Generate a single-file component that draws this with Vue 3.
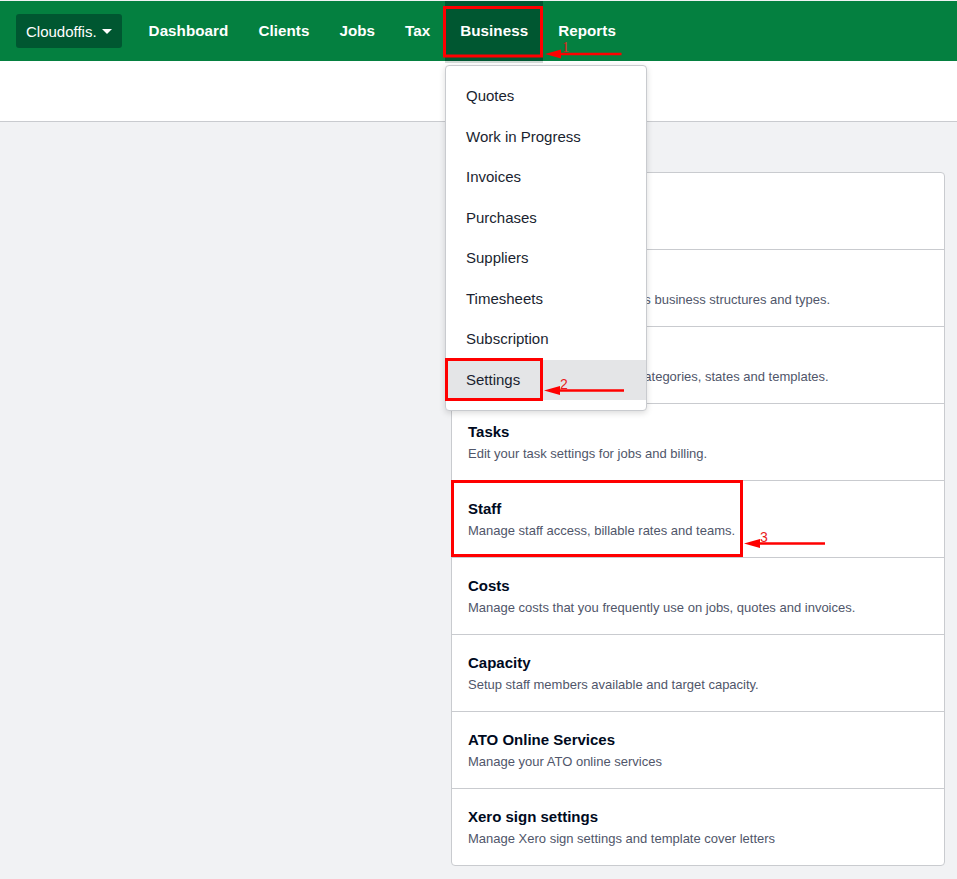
<script setup>
const navLinks = ["Dashboard", "Clients", "Jobs", "Tax", "Business", "Reports"]

const menuItems = ["Quotes", "Work in Progress", "Invoices", "Purchases", "Suppliers", "Timesheets", "Subscription", "Settings"]

const settingsRows = [
    { title: "General", text: "Manage your business details." },
    { title: "Clients", text: "Manage client types, addresses business structures and types." },
    { title: "Jobs", text: "Manage your job types, work categories, states and templates." },
    { title: "Tasks", text: "Edit your task settings for jobs and billing." },
    { title: "Staff", text: "Manage staff access, billable rates and teams." },
    { title: "Costs", text: "Manage costs that you frequently use on jobs, quotes and invoices." },
    { title: "Capacity", text: "Setup staff members available and target capacity." },
    { title: "ATO Online Services", text: "Manage your ATO online services" },
    { title: "Xero sign settings", text: "Manage Xero sign settings and template cover letters" }
]
</script>

<template>
    <div class="page">
        <nav class="navbar">
            <button class="brand">Cloudoffis.<span class="caret"></span></button>
            <a v-for="link in navLinks" :key="link" class="nav-link" :class="{ active: link === 'Business' }">{{ link }}</a>
        </nav>
        <div class="subbar"></div>

        <main class="content">
            <section class="card">
                <div v-for="row in settingsRows" :key="row.title" class="row">
                    <h4>{{ row.title }}</h4>
                    <p>{{ row.text }}</p>
                </div>
            </section>
        </main>

        <ul class="menu">
            <li v-for="item in menuItems" :key="item" :class="{ current: item === 'Settings' }">{{ item }}</li>
        </ul>

        <!-- red markup drawn on top of the screenshot -->
        <svg class="markup" width="957" height="879" viewBox="0 0 957 879">
            <g fill="none" stroke="#f00">
                <rect x="444.500" y="7.500" width="97" height="48.500" stroke-width="3" />
                <rect x="446.500" y="359.500" width="95" height="40" stroke-width="3" />
                <rect x="452.500" y="481.500" width="289" height="74" stroke-width="3" />
                <path d="M555 54H621.500M558 390.500H624M758 543.500H825" stroke-width="2.500" />
            </g>
            <g fill="#f00">
                <path d="M545 54L561 49.500V58.500Z" />
                <path d="M544 390.500L560 386V395Z" />
                <path d="M744 543.500L760 539V548Z" />
            </g>
            <g class="marks" fill="#e81c1c">
                <text class="serif" x="562" y="52">1</text>
                <text x="560" y="389">2</text>
                <text x="760" y="542">3</text>
            </g>
        </svg>
    </div>
</template>

<style scoped>
.page {
    position: relative;
    height: 879px;
    overflow: hidden;
    font-family: "Liberation Sans", Arial, sans-serif;
    background: #f1f2f4;
}
.navbar {
    display: flex;
    align-items: center;
    height: 60px;
    margin-top: 1px;
    padding-left: 16px;
    background: #048040;
}
.brand {
    display: flex;
    align-items: center;
    height: 34px;
    margin-right: 12px;
    padding: 0 10px;
    border: 0;
    border-radius: 3px;
    font: 15px "Liberation Sans", Arial, sans-serif;
    color: #fff;
    background: #005731;
}
.caret {
    width: 0;
    height: 0;
    margin-left: 5px;
    border-left: 5px solid transparent;
    border-right: 5px solid transparent;
    border-top: 5px solid #fff;
}
.nav-link {
    display: flex;
    align-items: center;
    height: 60px;
    box-sizing: border-box;
    padding: 0 15px 1px;
    font-size: 15.200px;
    letter-spacing: 0.050px;
    font-weight: 700;
    color: #fff;
}
.nav-link.active {
    background: #005731;
    box-shadow: 0 2px 0 #d5dcd9;
}
.subbar {
    height: 60px;
    background: #fff;
    border-bottom: 1px solid #c9cbcf;
}
.content {
    display: flex;
    justify-content: flex-end;
    padding: 50px 12px 0 0;
}
.card {
    width: 494px;
    box-sizing: border-box;
    border: 1px solid #c9cbcf;
    border-radius: 4px;
    background: #fff;
}
.row {
    height: 77px;
    box-sizing: border-box;
    padding: 19px 16px 0;
    border-top: 1px solid #c9cbcf;
}
.row:first-child {
    height: 76px;
    border-top: 0;
}
h4 {
    margin: 0 0 5px;
    font-size: 15px;
    line-height: 18px;
    font-weight: 700;
    color: #000a1e;
}
p {
    margin: 0;
    font-size: 13px;
    line-height: 16px;
    color: #50566a;
}
.menu {
    position: absolute;
    top: 65px;
    left: 445px;
    width: 202px;
    box-sizing: border-box;
    margin: 0;
    padding: 10px 0;
    list-style: none;
    background: #fff;
    border: 1px solid #c9cbcf;
    border-radius: 4px;
    box-shadow: 0 2px 6px rgba(0, 0, 0, 0.15);
}
.menu li {
    height: 40.500px;
    padding-left: 20px;
    font-size: 15px;
    line-height: 40.500px;
    color: #1a1f30;
}
.menu li.current {
    background: #e4e5e7;
}
.markup {
    position: absolute;
    top: 0;
    left: 0;
}
.marks {
    font-family: "Liberation Sans", sans-serif;
    font-size: 14px;
}
.marks .serif {
    font-family: "Liberation Serif", serif;
}
</style>
<style>
body {
    background: #f1f2f4;
}
</style>
